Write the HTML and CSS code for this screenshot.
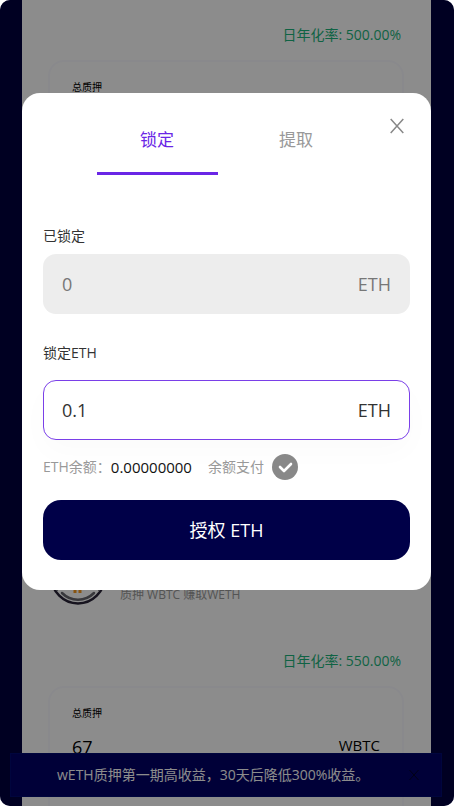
FILE: index.html
```
<!DOCTYPE html>
<html lang="zh-CN">
<head>
    <meta charset="UTF-8">
    <meta name="viewport" content="width=device-width, initial-scale=1.0">
    <title>质押</title>
    <link rel="stylesheet" href="styles.css">
</head>
<body>
    <div class="app">
        <main class="pools">
            <section class="pool">
                <p class="pool-rate">日年化率: 500.00%</p>
                <div class="pool-card pool-card-full">
                    <p class="pool-label">总质押</p>
                </div>
            </section>
            <section class="pool">
                <div class="pool-head">
                    <svg class="coin" viewBox="0 0 56 56" fill="none">
                        <circle cx="28" cy="28" r="26.5" fill="#fff" stroke="#282438" stroke-width="2.5"/>
                        <path d="M12 44a22.500 22.500 0 0 0 32 0" stroke="#66666e" stroke-width="2.5" stroke-linecap="round"/>
                        <path d="M5 38l2 3M51 38l-2 3" stroke="#66666e" stroke-width="2" stroke-linecap="round"/>
                        <path d="M25 39v5M30 39v5" stroke="#f79a1e" stroke-width="3"/>
                    </svg>
                    <p class="pool-desc">质押 WBTC 赚取WETH</p>
                </div>
                <p class="pool-rate">日年化率: 550.00%</p>
                <div class="pool-card">
                    <p class="pool-label">总质押</p>
                    <div class="pool-total">
                        <span class="pool-amount">67</span>
                        <span class="pool-unit">WBTC</span>
                    </div>
                </div>
            </section>
        </main>

        <div class="notice">
            <p class="notice-text">wETH质押第一期高收益，30天后降低300%收益。</p>
            <button class="notice-close" type="button" aria-label="关闭通知">
                <svg width="10" height="12" viewBox="0 0 10 12" fill="none" stroke="currentColor">
                    <path d="M.5 1l9 10M9.5 1l-9 10"/>
                </svg>
            </button>
        </div>

        <div class="overlay">
            <form class="dialog" role="dialog" aria-label="锁定">
                <button class="dialog-close" type="button" aria-label="关闭">
                    <svg width="14" height="16" viewBox="0 0 14 16" fill="none" stroke="currentColor" stroke-width="1.5">
                        <path d="M.7 1l12.6 14M13.3 1L.7 15"/>
                    </svg>
                </button>
                <div class="tabs">
                    <button class="tab active" type="button">锁定</button>
                    <button class="tab" type="button">提取</button>
                </div>

                <label class="field-label" for="locked">已锁定</label>
                <div class="field field-disabled">
                    <input id="locked" type="text" value="0" disabled>
                    <span class="field-unit">ETH</span>
                </div>

                <label class="field-label field-label-amount" for="amount">锁定ETH</label>
                <div class="field field-active">
                    <input id="amount" type="text" value="0.1">
                    <span class="field-unit">ETH</span>
                </div>

                <div class="balance">
                    <span>ETH余额：</span>
                    <span class="balance-value">0.00000000</span>
                    <label class="balance-pay" for="payBalance">余额支付</label>
                    <span class="check">
                        <input id="payBalance" type="checkbox" checked>
                        <svg viewBox="0 0 26 26" fill="none">
                            <path d="M8 13l4 4 7-7" stroke="#fff" stroke-width="2.6" stroke-linecap="round" stroke-linejoin="round"/>
                        </svg>
                    </span>
                </div>

                <button class="submit" type="submit">授权 ETH</button>
            </form>
        </div>
    </div>
</body>
</html>
```
FILE: styles.css
```
* {
    box-sizing: border-box;
}
body {
    margin: 0;
    background-color: #fff;
    font-family: "Open Sans", "Noto Sans CJK SC", sans-serif;
    font-size: 14px;
    line-height: 20px;
    color: #333;
}
p {
    margin: 0;
}
button, input {
    font: inherit;
    color: inherit;
    border: none;
    background: none;
    padding: 0;
    margin: 0;
}
button {
    cursor: pointer;
}
.app {
    position: relative;
    height: 100vh;
    margin-right: 1px;
    padding: 0 23px 0 22px;
    overflow: hidden;
    border-radius: 10px;
    background-color: #00003e;
}

/* Pool list */
.pools {
    min-height: 100%;
    padding: 25px 27px 0 26px;
    background-color: #fff;
}
.pool-rate {
    padding-right: 3px;
    text-align: right;
    color: #1db47c;
}
.pool-card {
    min-height: 140px;
    margin-top: 15px;
    padding: 17px 22px;
    border: 2px solid #fafaff;
    border-radius: 16px;
    color: #000;
}
.pool-card-full {
    min-height: 440px;
}
.pool-label {
    font-size: 10px;
    line-height: 16px;
}
.pool-total {
    display: flex;
    justify-content: space-between;
    align-items: flex-start;
    margin-top: 14px;
}
.pool-amount {
    font-size: 18px;
    line-height: 24px;
}
.pool-unit {
    font-size: 15px;
}
.pool-head {
    display: flex;
    align-items: flex-end;
    gap: 14px;
    margin: 49px 0 46px 2px;
}
.coin {
    width: 56px;
    height: 56px;
}
.pool-desc {
    font-size: 12px;
    color: #999;
}

/* Bottom notice */
.notice {
    position: absolute;
    left: 10px;
    right: 12px;
    bottom: 9px;
    display: flex;
    align-items: center;
    justify-content: space-between;
    padding: 11px 22px 11px 46px;
    border: 1px solid #000a70;
    background-color: #000066;
    color: #fff;
}
.notice-close {
    display: flex;
    color: #000028;
}

/* Dialog */
.overlay {
    position: absolute;
    inset: 0;
    padding: 93px 23px 0 22px;
    background-color: rgba(0, 0, 0, 0.45);
}
.dialog {
    position: relative;
    padding: 35px 21px 30px;
    border-radius: 18px;
    background-color: #fff;
}
.dialog-close {
    position: absolute;
    top: 25px;
    right: 27px;
    display: flex;
    color: #888;
}
.tabs {
    display: flex;
    justify-content: center;
    gap: 18px;
    margin-bottom: 51px;
}
.tab {
    width: 121px;
    padding-bottom: 20px;
    border-bottom: 3px solid transparent;
    font-size: 17px;
    line-height: 24px;
    color: #999;
}
.tab.active {
    border-color: #6a26e6;
    color: #6a26e6;
}
.field-label {
    display: block;
    margin-bottom: 8px;
}
.field-label-amount {
    margin: 29px 0 17px;
}
.field {
    display: flex;
    align-items: center;
    height: 60px;
    padding: 0 18px;
    border: 1px solid transparent;
    border-radius: 13px;
    font-size: 18px;
    line-height: 24px;
}
.field input {
    flex: 1;
    min-width: 0;
    outline: none;
}
.field-disabled {
    background-color: #ededed;
    color: #777;
}
.field-active {
    border-color: #7a3fe8;
    box-shadow: 0 12px 30px rgba(0, 0, 0, 0.02);
}
.balance {
    display: flex;
    align-items: center;
    margin: 14px 0 20px;
    color: #999;
}
.balance-value {
    font-size: 15px;
    color: #111;
}
.balance-pay {
    margin: 0 8px 0 16px;
}
.check {
    display: grid;
}
.check input, .check svg {
    grid-area: 1 / 1;
    width: 26px;
    height: 26px;
}
.check input {
    appearance: none;
    border-radius: 50%;
    background-color: #bbb;
}
.check input:checked {
    background-color: #888;
}
.check svg {
    pointer-events: none;
}
.submit {
    display: block;
    width: 100%;
    padding: 18px;
    border-radius: 18px;
    background-color: #000048;
    font-size: 18px;
    line-height: 24px;
    color: #fff;
}
```
